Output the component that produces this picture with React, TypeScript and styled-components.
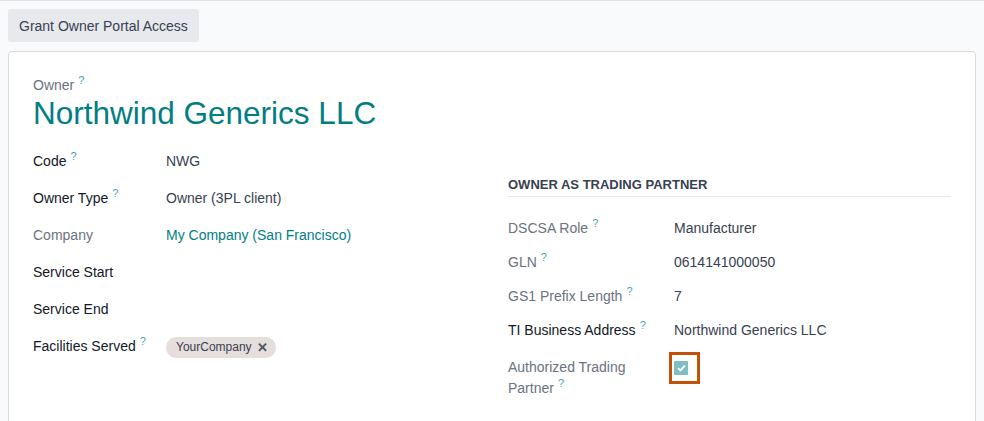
import React from "react";
import styled, { createGlobalStyle } from "styled-components";

const GlobalStyle = createGlobalStyle`
  html, body {
    margin: 0;
    padding: 0;
    background: #f9fafb;
    font-family: "Liberation Sans", Arial, sans-serif;
    font-size: 14px;
    color: #374151;
  }
`;

const Page = styled.div`
  min-height: 421px;
  border-top: 1px solid #dee2e6;
  padding: 8px 8px 0 8px;
  box-sizing: border-box;
`;

const Toolbar = styled.div`
  display: flex;
  gap: 8px;
  margin-bottom: 9px;
`;

const ActionButton = styled.button`
  font-family: inherit;
  font-size: 14px;
  color: #374151;
  background: #e7e9ed;
  border: none;
  border-radius: 3px;
  height: 33px;
  padding: 0 11px;
  cursor: pointer;
`;

const Sheet = styled.div`
  background: #fff;
  border: 1px solid #d8dadd;
  border-radius: 4px;
  padding: 24px 24px 40px 24px;
  min-height: 380px;
  box-sizing: border-box;
`;

const OwnerLabel = styled.div`
  color: #6b7280;
  font-size: 14px;
  margin-top: 1px;
`;

const Title = styled.h1`
  margin: 0 0 18px 0;
  font-weight: 400;
  font-size: 31.5px;
  line-height: 40px;
  color: #017e84;
`;

const Columns = styled.div`
  display: grid;
  grid-template-columns: 1fr 1fr;
  column-gap: 32px;
`;

const Group = styled.div<{ $top?: number }>`
  display: flex;
  flex-direction: column;
  padding-top: ${(p) => p.$top ?? 0}px;
`;

const Row = styled.div<{ $label: number; $height: number; $gap?: number }>`
  display: grid;
  grid-template-columns: ${(p) => p.$label}px 1fr;
  min-height: ${(p) => p.$height}px;
  margin-top: ${(p) => p.$gap ?? 0}px;
  align-items: start;
`;

const Label = styled.div<{ $muted?: boolean }>`
  color: ${(p) => (p.$muted ? "#6b7280" : "#111827")};
  line-height: 21px;
  padding-right: 12px;
`;

const Help = styled.sup`
  color: #4b9fc2;
  font-size: 11px;
  margin-left: 4px;
  vertical-align: 6px;
  line-height: 0;
`;

const Value = styled.div<{ $link?: boolean }>`
  color: ${(p) => (p.$link ? "#017e84" : "#374151")};
  line-height: 21px;
`;

const Tag = styled.span`
  display: inline-flex;
  align-items: center;
  gap: 5px;
  height: 21px;
  padding: 0 8px 0 10px;
  border-radius: 11px;
  background: #e6dedc;
  color: #374151;
  font-size: 12px;
`;

const TagClose = styled.span`
  font-size: 13px;
  font-weight: 700;
  color: #4b5563;
`;

const SectionHeader = styled.div`
  font-size: 13px;
  font-weight: 700;
  color: #374151;
  text-transform: uppercase;
  padding-bottom: 4px;
  border-bottom: 1px solid #e5e7eb;
  margin-bottom: 21px;
`;

const Highlight = styled.div`
  display: flex;
  align-items: center;
  justify-content: flex-start;
  width: 31px;
  height: 32px;
  box-sizing: border-box;
  padding-left: 2px;
  border: 3px solid #c2510a;
  margin-left: -5px;
  margin-top: -5px;
`;

const CheckBox = styled.span`
  display: inline-flex;
  align-items: center;
  justify-content: center;
  width: 14px;
  height: 14px;
  background: #7fbfc1;
  border-radius: 1px;
`;

const leftRows: { label: string; help?: boolean; muted?: boolean; value?: React.ReactNode; link?: boolean }[] = [
  { label: "Code", help: true, value: "NWG" },
  { label: "Owner Type", help: true, value: "Owner (3PL client)" },
  { label: "Company", muted: true, value: "My Company (San Francisco)", link: true },
  { label: "Service Start" },
  { label: "Service End" },
];

const rightRows: { label: string; help?: boolean; muted?: boolean; value?: string }[] = [
  { label: "DSCSA Role", help: true, muted: true, value: "Manufacturer" },
  { label: "GLN", help: true, muted: true, value: "0614141000050" },
  { label: "GS1 Prefix Length", help: true, muted: true, value: "7" },
  { label: "TI Business Address", help: true, value: "Northwind Generics LLC" },
];

export default function App() {
  return (
    <>
      <GlobalStyle />
      <Page>
        <Toolbar>
          <ActionButton>Grant Owner Portal Access</ActionButton>
        </Toolbar>
        <Sheet>
          <OwnerLabel>
            Owner<Help>?</Help>
          </OwnerLabel>
          <Title>Northwind Generics LLC</Title>
          <Columns>
            <Group>
              {leftRows.map((r) => (
                <Row key={r.label} $label={133} $height={37}>
                  <Label $muted={r.muted}>
                    {r.label}
                    {r.help && <Help>?</Help>}
                  </Label>
                  <Value $link={r.link}>{r.value}</Value>
                </Row>
              ))}
              <Row $label={133} $height={37}>
                <Label>
                  Facilities Served<Help>?</Help>
                </Label>
                <Value>
                  <Tag>
                    YourCompany<TagClose>✕</TagClose>
                  </Tag>
                </Value>
              </Row>
            </Group>
            <Group $top={26}>
              <SectionHeader>Owner as Trading Partner</SectionHeader>
              {rightRows.map((r) => (
                <Row key={r.label} $label={166} $height={34}>
                  <Label $muted={r.muted}>
                    {r.label}
                    {r.help && <Help>?</Help>}
                  </Label>
                  <Value>{r.value}</Value>
                </Row>
              ))}
              <Row $label={166} $height={42} $gap={3}>
                <Label $muted>
                  Authorized Trading
                  <br />
                  Partner<Help>?</Help>
                </Label>
                <Value>
                  <Highlight>
                    <CheckBox>
                      <svg width="9" height="8" viewBox="0 0 9 8">
                        <path d="M1 4.2 L3.4 6.4 L8 1.6" fill="none" stroke="#fff" strokeWidth="1.8" />
                      </svg>
                    </CheckBox>
                  </Highlight>
                </Value>
              </Row>
            </Group>
          </Columns>
        </Sheet>
      </Page>
    </>
  );
}
